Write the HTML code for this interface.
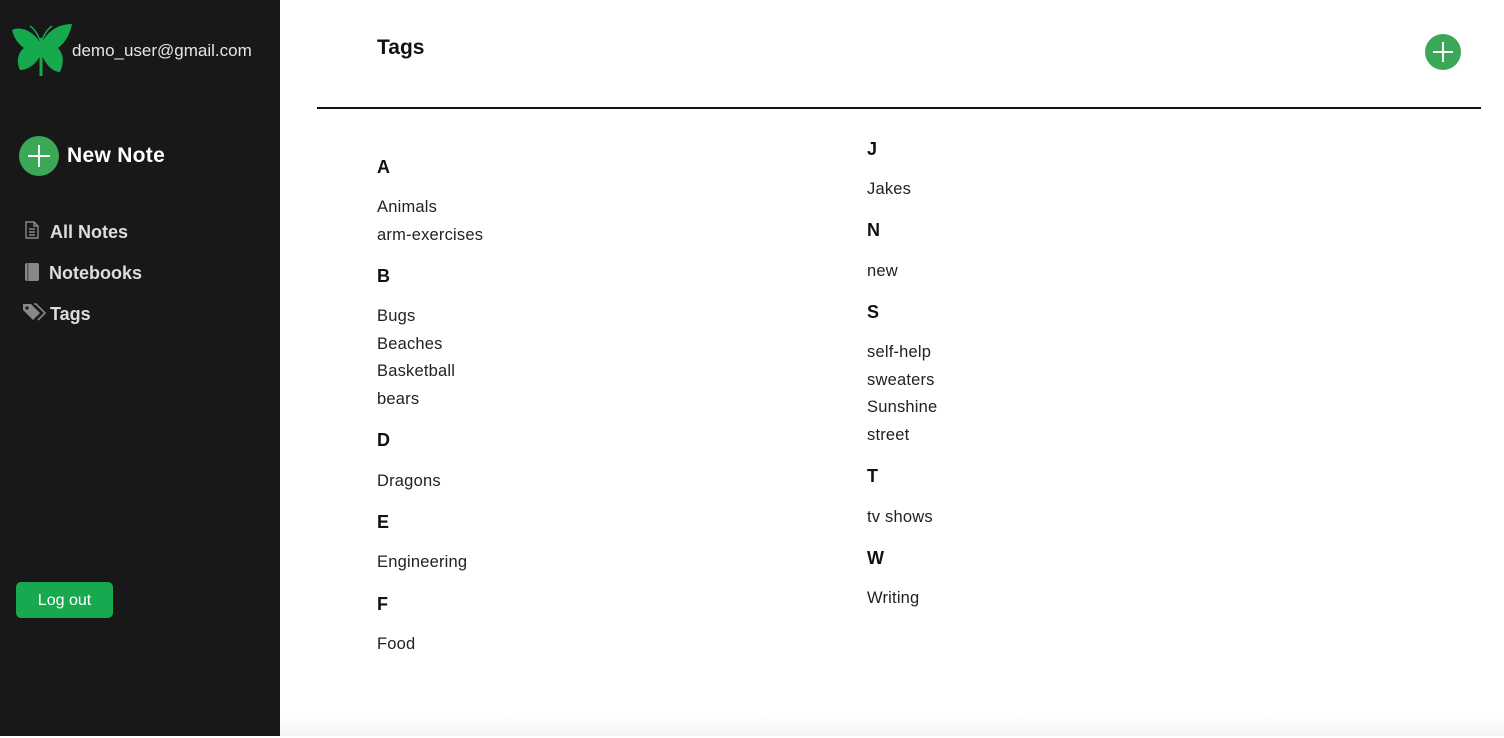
<!DOCTYPE html>
<html><head><style>
body{margin:0;width:1504px;height:736px;overflow:hidden;background:#fff;font-family:"Liberation Sans",sans-serif;position:relative}
.sb{position:absolute;left:0;top:0;width:280px;height:736px;background:#181818}
.a{position:absolute;line-height:20px;white-space:nowrap}
.h{font-weight:bold;font-size:18px;color:#111}
.i{font-size:16.5px;color:#222;letter-spacing:0.2px}
.n{color:#ddd;font-weight:bold;font-size:18px}
.c{position:absolute;left:0;top:2px;width:1504px;height:736px}
</style></head><body>
<div class="sb">
<svg style="position:absolute;left:10px;top:22px" width="64" height="56" viewBox="0 0 64 56">
<path d="M30 20 C22 8 10 4 2 8 C4 16 8 22 14 26 C8 30 6 40 10 48 C18 48 26 42 30 34 Z" fill="#17a94e"/>
<path d="M32 20 C40 6 52 2 62 2 C60 12 56 20 48 26 C54 32 54 42 50 50 C42 50 36 42 32 34 Z" fill="#17a94e"/>
<rect x="29.5" y="16" width="3" height="38" fill="#17a94e"/>
<path d="M30 18 Q26 8 20 4 M32 18 Q36 8 42 4" stroke="#17a94e" stroke-width="1.5" fill="none"/>
</svg>
<div class="a" style="left:72px;top:41px;color:#e6e6e6;font-size:17px">demo_user@gmail.com</div>
<div style="position:absolute;left:19px;top:136px;width:40px;height:40px;border-radius:50%;background:#3aa856"></div>
<div style="position:absolute;left:28px;top:155px;width:22px;height:2px;background:#fff"></div>
<div style="position:absolute;left:38px;top:145px;width:2px;height:22px;background:#fff"></div>
<div class="a" style="left:67px;top:146px;color:#fff;font-weight:bold;font-size:21px;letter-spacing:0.3px">New Note</div>
<svg style="position:absolute;left:25px;top:221px" width="14" height="18" viewBox="0 0 14 18"><path d="M1 1h8l4 4v12H1z M9 1v4h4 M4 8h6M4 11h6M4 14h6" stroke="#888" stroke-width="1.4" fill="none"/></svg>
<div class="a n" style="left:50px;top:222px">All Notes</div>
<svg style="position:absolute;left:24px;top:262px" width="16" height="20"><rect x="1" y="1" width="14" height="18" rx="2" fill="#888"/><rect x="3" y="1" width="1.5" height="18" fill="#555"/></svg>
<div class="a n" style="left:49px;top:263px">Notebooks</div>
<svg style="position:absolute;left:22px;top:303px" width="24" height="20" viewBox="0 0 24 20"><path d="M1 1h8l9 9-7 7-10-10z" fill="#888"/><circle cx="5" cy="5" r="1.6" fill="#181818"/><path d="M12 1h2l9 9-7 7" stroke="#888" stroke-width="1.6" fill="none"/></svg>
<div class="a n" style="left:50px;top:304px">Tags</div>
<div style="position:absolute;left:16px;top:582px;width:97px;height:36px;border-radius:5px;background:#18a84f;color:#fff;font-size:16px;line-height:38px;text-align:center">Log out</div>
</div>
<div class="a" style="left:377px;top:38px;font-size:21px;font-weight:bold;color:#111">Tags</div>
<div style="position:absolute;left:1425px;top:34px;width:36px;height:36px;border-radius:50%;background:#3aa856"></div>
<div style="position:absolute;left:1433px;top:51px;width:20px;height:1.5px;background:#fff"></div>
<div style="position:absolute;left:1442px;top:42px;width:1.5px;height:20px;background:#fff"></div>
<div style="position:absolute;left:317px;top:107px;width:1164px;height:2px;background:#111"></div>
<div style="position:absolute;left:280px;top:716px;width:1224px;height:20px;background:linear-gradient(#fff,#f3f3f3)"></div>
<div class="c">
<div class="a h" style="left:377px;top:155px">A</div>
<div class="a i" style="left:377px;top:195px">Animals</div>
<div class="a i" style="left:377px;top:223px">arm-exercises</div>
<div class="a h" style="left:377px;top:264px">B</div>
<div class="a i" style="left:377px;top:304px">Bugs</div>
<div class="a i" style="left:377px;top:332px">Beaches</div>
<div class="a i" style="left:377px;top:359px">Basketball</div>
<div class="a i" style="left:377px;top:387px">bears</div>
<div class="a h" style="left:377px;top:428px">D</div>
<div class="a i" style="left:377px;top:469px">Dragons</div>
<div class="a h" style="left:377px;top:510px">E</div>
<div class="a i" style="left:377px;top:550px">Engineering</div>
<div class="a h" style="left:377px;top:592px">F</div>
<div class="a i" style="left:377px;top:632px">Food</div>

<div class="a h" style="left:867px;top:137px">J</div>
<div class="a i" style="left:867px;top:177px">Jakes</div>
<div class="a h" style="left:867px;top:218px">N</div>
<div class="a i" style="left:867px;top:259px">new</div>
<div class="a h" style="left:867px;top:300px">S</div>
<div class="a i" style="left:867px;top:340px">self-help</div>
<div class="a i" style="left:867px;top:368px">sweaters</div>
<div class="a i" style="left:867px;top:395px">Sunshine</div>
<div class="a i" style="left:867px;top:423px">street</div>
<div class="a h" style="left:867px;top:464px">T</div>
<div class="a i" style="left:867px;top:505px">tv shows</div>
<div class="a h" style="left:867px;top:546px">W</div>
<div class="a i" style="left:867px;top:586px">Writing</div>
</div>
</body></html>
